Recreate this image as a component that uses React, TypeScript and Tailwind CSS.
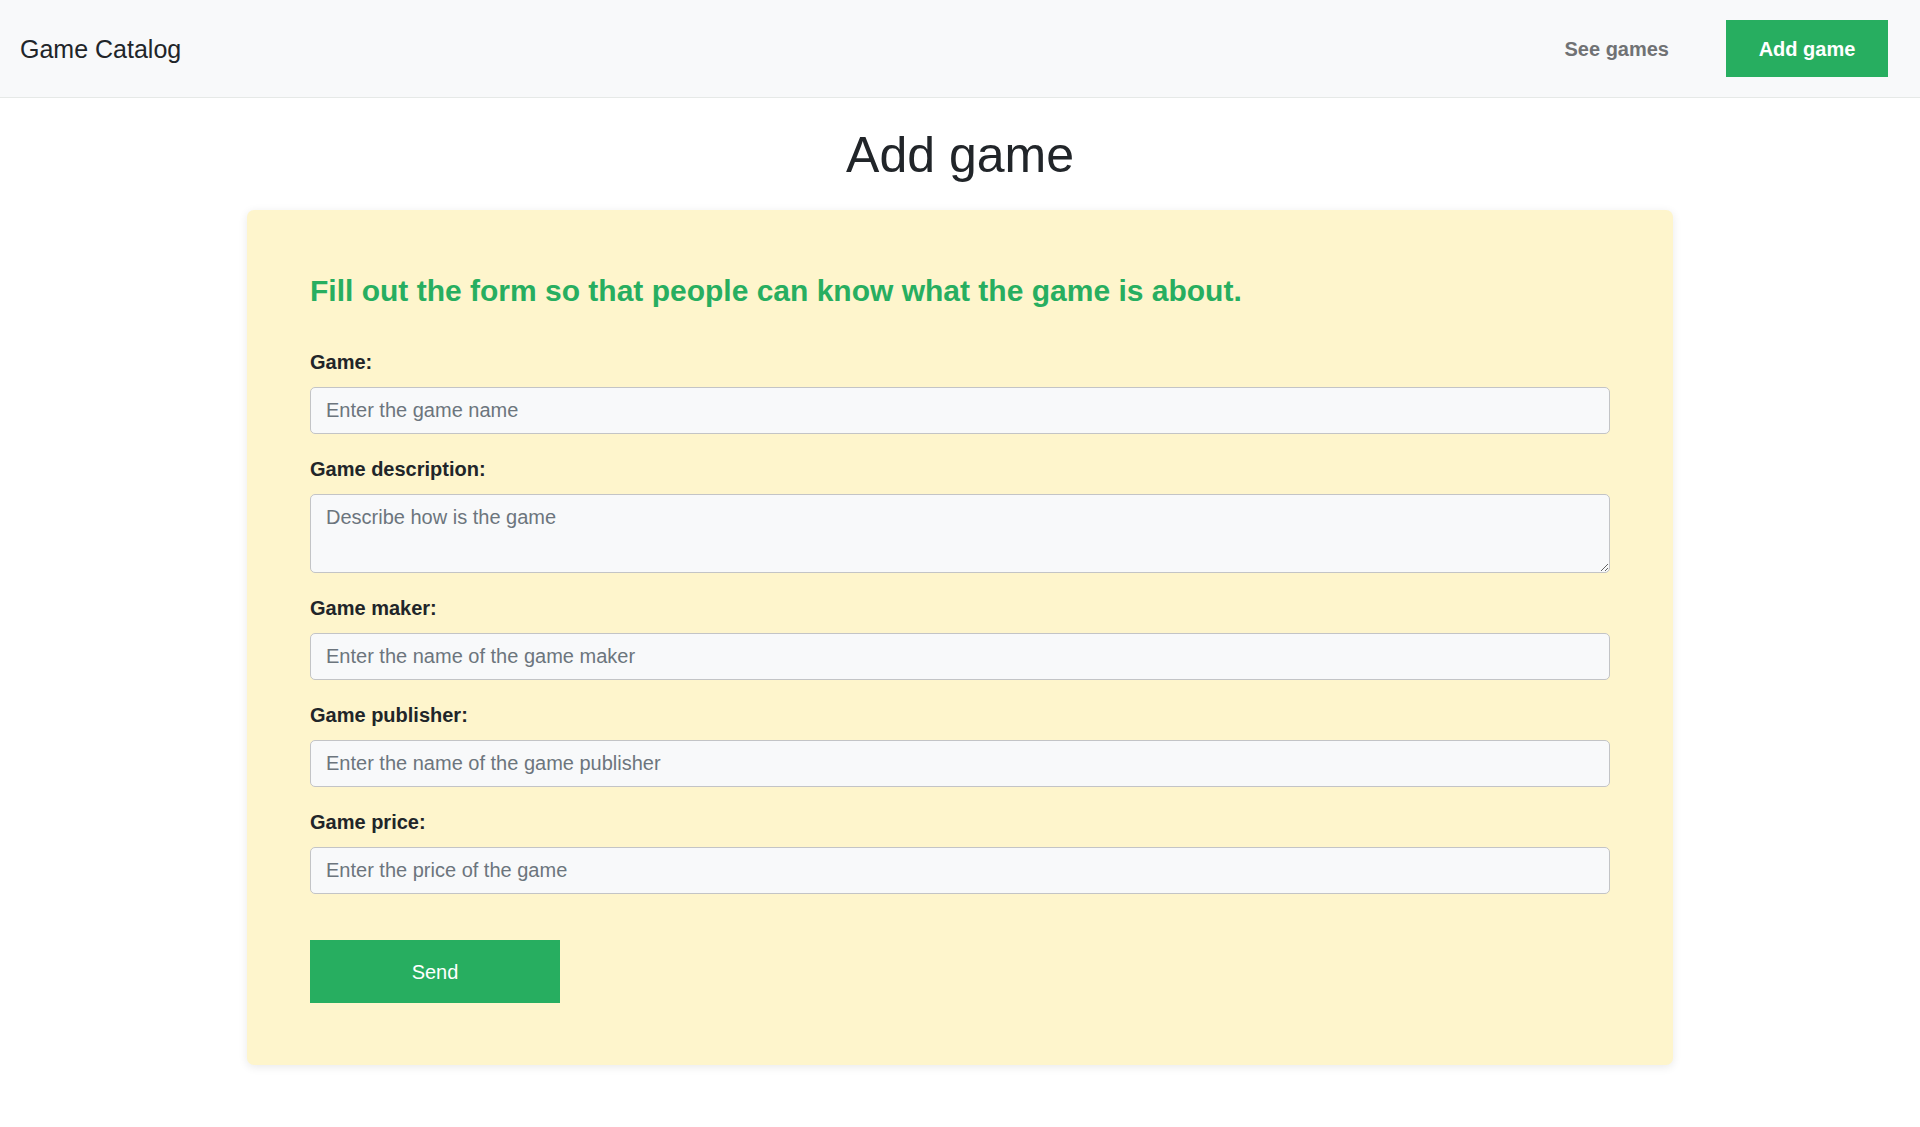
import React from "react"

const fields = [
  { id: "name", label: "Game:", placeholder: "Enter the game name" },
  { id: "description", label: "Game description:", placeholder: "Describe how is the game", area: true },
  { id: "maker", label: "Game maker:", placeholder: "Enter the name of the game maker" },
  { id: "publisher", label: "Game publisher:", placeholder: "Enter the name of the game publisher" },
  { id: "price", label: "Game price:", placeholder: "Enter the price of the game" },
]

function Navbar() {
  return (
    <nav className="flex h-[98px] items-center justify-between border-b border-[#e6e9e7] bg-[#f8f9fa] pl-[20px] pr-[32px]">
      <a href="#" className="text-[25px] leading-[30px] text-[#212529]">
        Game Catalog
      </a>
      <div className="flex items-center gap-[57px]">
        <a href="#" className="text-[20px] font-bold leading-[30px] text-[#707274]">
          See games
        </a>
        <a
          href="#"
          className="flex h-[57px] w-[162px] items-center justify-center bg-[#27ae60] text-[20px] font-bold text-white"
        >
          Add game
        </a>
      </div>
    </nav>
  )
}

export default function App() {
  const inputCls =
    "block w-full rounded-[5px] border border-[#c3c4c6] bg-[#f8f9fa] px-[15px] py-[7px] text-[20px] leading-[30px] text-[#212529] placeholder:text-[#6c757d] outline-none"

  return (
    <div className="min-h-screen bg-white font-['Liberation_Sans',Arial,sans-serif] text-[#212529]">
      <Navbar />
      <main className="flex flex-col items-center pt-[27px]">
        <h1 className="mb-[25px] text-[50px] leading-[60px] text-[#212529]">Add game</h1>
        <form
          className="w-[1426px] rounded-[7px] bg-[#fef5cc] px-[63px] pb-[62px] pt-[63px] shadow-[0_2px_10px_rgba(0,0,0,0.09)]"
          onSubmit={(e) => e.preventDefault()}
        >
          <h3 className="mb-[38px] text-[30px] font-bold leading-[36px] text-[#27ae60]">
            Fill out the form so that people can know what the game is about.
          </h3>
          {fields.map((f) => (
            <div key={f.id} className="mb-[20px]">
              <label htmlFor={f.id} className="mb-[10px] block text-[20px] font-bold leading-[30px]">
                {f.label}
              </label>
              {f.area ? (
                <textarea id={f.id} rows={2} placeholder={f.placeholder} className={inputCls + " h-[79px]"} />
              ) : (
                <input id={f.id} type="text" placeholder={f.placeholder} className={inputCls + " h-[47px]"} />
              )}
            </div>
          ))}
          <button
            type="submit"
            className="mt-[26px] h-[63px] w-[250px] bg-[#27ae60] text-[20px] text-white"
          >
            Send
          </button>
        </form>
      </main>
    </div>
  )
}
